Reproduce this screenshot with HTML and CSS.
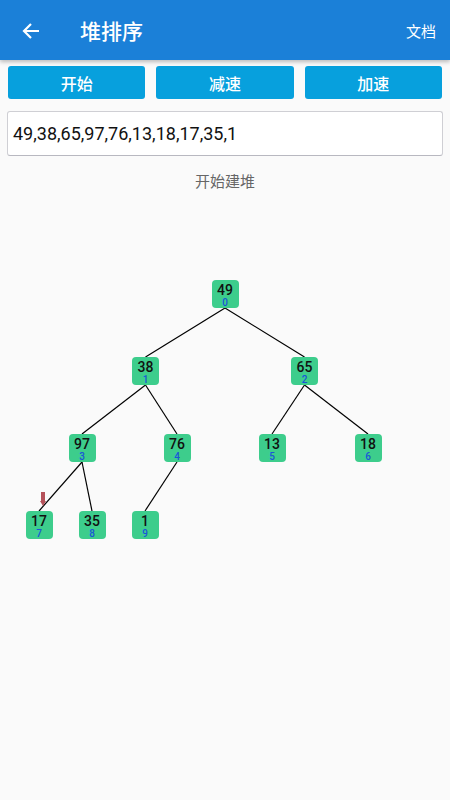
FILE: index.html
```html
<!DOCTYPE html>
<html>
<head>
<meta charset="utf-8">
<link rel="stylesheet" href="styles.css">
</head>
<body>
<div class="appbar">
  <svg class="back" width="20" height="20" viewBox="0 0 20 20"><path d="M18 10H3M10 3L3 10L10 17" fill="none" stroke="#fff" stroke-width="2.2"/></svg>
  <div class="title">堆排序</div>
  <div class="doc">文档</div>
</div>
<div class="btns">
  <div class="btn">开始</div>
  <div class="btn">减速</div>
  <div class="btn">加速</div>
</div>
<div class="input">49,38,65,97,76,13,18,17,35,1</div>
<div class="status">开始建堆</div>
<div class="canvas">
  <svg class="lines" width="450" height="400" viewBox="0 200 450 400">
    <g stroke="#000" stroke-width="1.2">
      <line x1="225" y1="308" x2="145.5" y2="357"/>
      <line x1="225" y1="308" x2="304.5" y2="357"/>
      <line x1="145.5" y1="385" x2="82" y2="434"/>
      <line x1="145.5" y1="385" x2="177" y2="434"/>
      <line x1="304.5" y1="385" x2="272" y2="434"/>
      <line x1="304.5" y1="385" x2="368" y2="434"/>
      <line x1="82" y1="462" x2="39" y2="511"/>
      <line x1="82" y1="462" x2="92" y2="511"/>
      <line x1="177" y1="462" x2="145" y2="511"/>
    </g>
    <polygon points="41,492 45,492 45,501 46,501 43,506 40,501 41,501" fill="#b5525a"/>
  </svg>
  <div class="node" style="left:211.5px;top:80px"><span class="v">49</span><span class="i">0</span></div>
  <div class="node" style="left:132px;top:157px"><span class="v">38</span><span class="i">1</span></div>
  <div class="node" style="left:291px;top:157px"><span class="v">65</span><span class="i">2</span></div>
  <div class="node" style="left:68.5px;top:234px"><span class="v">97</span><span class="i">3</span></div>
  <div class="node" style="left:163.5px;top:234px"><span class="v">76</span><span class="i">4</span></div>
  <div class="node" style="left:258.5px;top:234px"><span class="v">13</span><span class="i">5</span></div>
  <div class="node" style="left:354.5px;top:234px"><span class="v">18</span><span class="i">6</span></div>
  <div class="node" style="left:25.5px;top:311px"><span class="v">17</span><span class="i">7</span></div>
  <div class="node" style="left:78.5px;top:311px"><span class="v">35</span><span class="i">8</span></div>
  <div class="node" style="left:131.5px;top:311px"><span class="v">1</span><span class="i">9</span></div>
</div>
</body>
</html>
```
FILE: styles.css
```css
html, body {
  margin: 0;
  padding: 0;
  background: #fafafa;
  font-family: Roboto, "Noto Sans CJK SC", sans-serif;
  width: 450px;
  height: 800px;
  overflow: hidden;
}
.appbar {
  height: 60px;
  background: #1b80d8;
  display: flex;
  align-items: center;
  color: #fff;
  box-shadow: 0 2px 4px rgba(0,0,0,0.25);
  position: relative;
  z-index: 1;
}
.back {
  margin-left: 21px;
  margin-top: 1px;
}
.title {
  margin-left: 39px;
  font-size: 21px;
  font-weight: 500;
}
.doc {
  margin-left: auto;
  margin-right: 14px;
  font-size: 15px;
}
.btns {
  display: flex;
  gap: 11px;
  padding: 6px 8px 0 8px;
}
.btn {
  flex: 1;
  height: 33px;
  background: #07a0dd;
  border-radius: 3px;
  color: #fff;
  font-size: 16px;
  font-weight: 500;
  display: flex;
  align-items: center;
  justify-content: center;
}
.input {
  margin: 12px 7px 0 7px;
  height: 43px;
  border: 1px solid #cfcfd4;
  border-bottom-color: #b8b8c0;
  border-radius: 3px;
  background: #fff;
  font-size: 18px;
  color: #111;
  display: flex;
  align-items: center;
  padding-left: 5px;
}
.status {
  text-align: center;
  color: #666;
  font-size: 15px;
  margin-top: 15px;
  line-height: 22px;
}
.canvas {
  position: absolute;
  left: 0;
  top: 200px;
  width: 450px;
  height: 400px;
}
.lines {
  position: absolute;
  left: 0;
  top: 0;
}
.node {
  position: absolute;
  width: 27px;
  height: 28px;
  background: #3dcd8c;
  border-radius: 4px;
  display: flex;
  flex-direction: column;
  align-items: center;
  padding-top: 2px;
  box-sizing: border-box;
}
.v {
  font-size: 14px;
  line-height: 16px;
  font-weight: 500;
  color: #111;
}
.i {
  font-size: 10px;
  line-height: 10px;
  font-weight: 500;
  color: #1a55d8;
}
```
